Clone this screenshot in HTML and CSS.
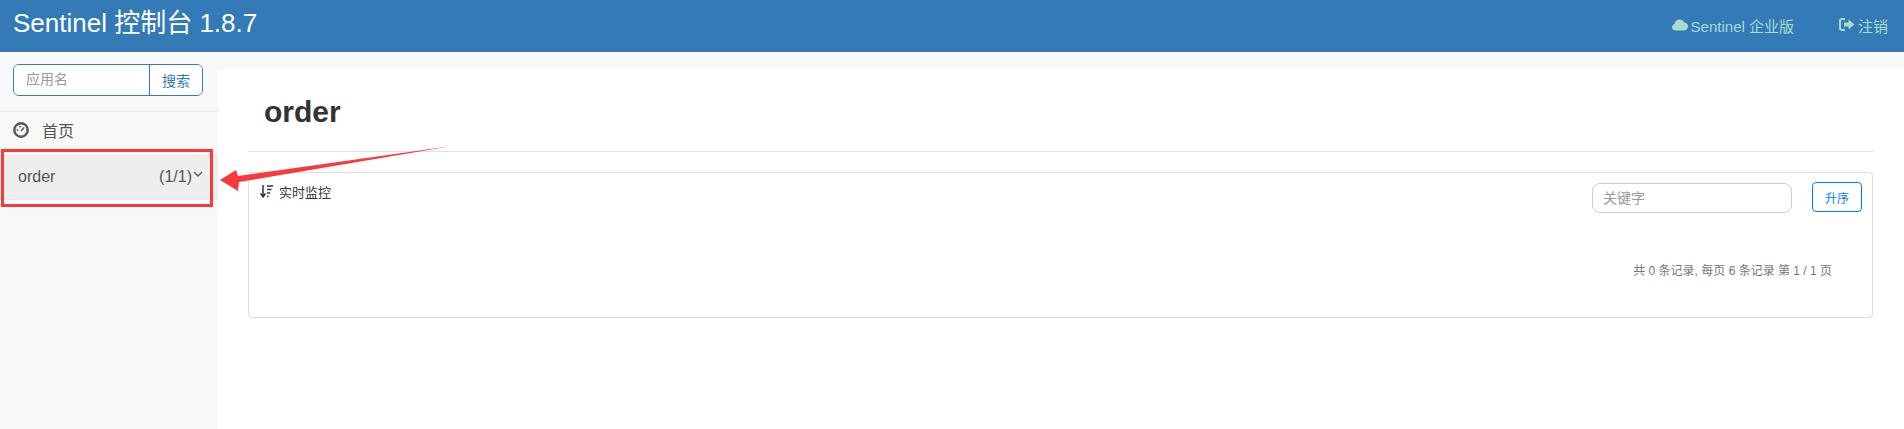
FILE: index.html
```html
<!DOCTYPE html>
<html lang="zh-CN">
<head>
    <meta charset="UTF-8" />
    <title>Sentinel 控制台</title>
    <link rel="stylesheet" href="styles.css">
</head>
<body>

<header class="navbar">
    <a class="brand">Sentinel 控制台 1.8.7</a>
    <div class="nav-links">
        <a class="nav-link">
            <svg class="nav-icon" viewBox="0 0 16 12" width="16" height="12"><path d="M4 11.5C1.8 11.5 0 10.2 0 8.2c0-1.6 1-2.8 2.5-3.2C2.8 2.6 4.8 .5 7.5 .5c2.2 0 3.9 1.3 4.6 3.1 2.2 0 3.900 1.700 3.900 3.900s-1.700 4-3.900 4z" fill="currentColor"/></svg>
            Sentinel 企业版
        </a>
        <a class="nav-link">
            <svg class="nav-icon" viewBox="0 0 16 13" width="16" height="13"><path d="M6 1H3.200C1.900 1 1 1.900 1 3.200v6.600C1 11.100 1.900 12 3.200 12H6" fill="none" stroke="currentColor" stroke-width="2"/><path d="M9.500 1.500 15.500 6.500 9.500 11.500V8.500H5v-4h4.500z" fill="currentColor"/></svg>
            注销
        </a>
    </div>
</header>

<div class="layout">
    <aside class="sidebar">
        <div class="search-box">
            <input class="search-input" type="text" placeholder="应用名" />
            <button class="search-btn">搜索</button>
        </div>
        <a class="home-link">
            <svg class="home-icon" viewBox="0 0 16 16" width="16" height="16">
                <circle cx="8" cy="8" r="6.700" fill="none" stroke="currentColor" stroke-width="2.400"/>
                <path d="M8 9 11 5.500" stroke="currentColor" stroke-width="1.500"/>
                <circle cx="4.500" cy="8" r=".9" fill="currentColor"/>
                <circle cx="7" cy="4.600" r=".9" fill="currentColor"/>
            </svg>
            首页
        </a>
        <div class="app-row">
            <span>order</span>
            <span class="app-count">(1/1)<svg class="chevron" viewBox="0 0 10 6" width="10" height="6"><path d="M1 1l4 4 4-4" fill="none" stroke="currentColor" stroke-width="1.300"/></svg></span>
        </div>
    </aside>

    <main class="content">
        <h1 class="page-title">order</h1>
        <div class="title-rule"></div>
        <section class="card">
            <div class="card-head">
                <div class="card-title">
                    <svg class="sort-icon" viewBox="0 0 13 13" width="13" height="13"><path d="M3 0v11M.5 8.500 3 12l2.500-3.500" fill="none" stroke="currentColor" stroke-width="1.500"/><path d="M7 1h6M7 4.500h4.500M7 8h3M7 11.500h1.500" stroke="currentColor" stroke-width="1.600"/></svg>
                    <span>实时监控</span>
                </div>
                <div class="card-tools">
                    <input class="key-input" type="text" placeholder="关键字" />
                    <button class="sort-btn">升序</button>
                </div>
            </div>
            <p class="pager">共 0 条记录, 每页 6 条记录 第 1 / 1 页</p>
        </section>
    </main>
</div>

<!-- 标注：红框和箭头 -->
<div class="mark-box"></div>
<svg class="mark-arrow" viewBox="0 0 240 60" width="240" height="60"><path d="M0 35 16 25 18 31 232 1 19 37 18 46z" fill="#f93a3a"/></svg>

</body>
</html>
```

FILE: styles.css
```css
* {
    box-sizing: border-box;
}
html, body {
    height: 100%;
}
body {
    margin: 0;
    overflow: hidden;
    background: #f8f8f8;
    color: #333;
    font-family: "Liberation Sans", "Noto Sans CJK SC", sans-serif;
    font-size: 14px;
}
.navbar {
    display: flex;
    justify-content: space-between;
    height: 52px;
    padding: 0 16px 0 13px;
    background: #337ab7;
}
.brand {
    padding-top: 8px;
    color: #fff;
    font-size: 26px;
    line-height: 30px;
}
.nav-links {
    display: flex;
    gap: 45px;
    padding-top: 15px;
}
.nav-link {
    display: flex;
    align-items: center;
    gap: 3px;
    height: 20px;
    color: #a8dcd1;
    font-size: 15px;
}
.nav-icon {
    margin-top: -1px;
}
.layout {
    display: flex;
    height: 377px;
}
.sidebar {
    flex: none;
    width: 218px;
    padding-top: 12px;
}
.search-box {
    display: flex;
    height: 32px;
    margin: 0 15px 15px 13px;
    border: 1px solid #337ab7;
    border-radius: 6px;
    overflow: hidden;
    background: #fff;
}
.search-input {
    flex: 1;
    min-width: 0;
    padding: 0 12px 3px;
    border: 0;
    outline: none;
    font: inherit;
}
.search-input::placeholder, .key-input::placeholder {
    color: #999;
    opacity: 1;
}
.search-btn {
    flex: none;
    width: 53px;
    padding: 0;
    border: 0;
    border-left: 1px solid #337ab7;
    background: #fff;
    color: #337ab7;
    font: inherit;
}
.home-link {
    display: flex;
    align-items: center;
    gap: 13px;
    height: 44px;
    padding: 0 0 7px 13px;
    border-top: 1px solid #e7e7e7;
    color: #555;
    font-size: 16px;
}
.app-row {
    display: flex;
    justify-content: space-between;
    align-items: center;
    height: 45px;
    padding: 0 15px 2px 18px;
    border-top: 1px solid #e7e7e7;
    border-bottom: 1px solid #e7e7e7;
    background: #eee;
    color: #555;
    font-size: 16px;
}
.app-count {
    display: flex;
    align-items: center;
}
.chevron {
    margin: -5px 0 0 1px;
}
.content {
    flex: 1;
    margin-top: 17px;
    padding: 0 31px 0 30px;
    background: #fff;
}
.page-title {
    margin: 0;
    padding: 26px 0 0 16px;
    height: 82px;
    color: #333;
    font-size: 30px;
    line-height: 34px;
}
.title-rule {
    height: 1px;
    background: #e2e2e2;
}
.card {
    height: 146px;
    margin-top: 20px;
    border: 1px solid #ddd;
    border-radius: 4px;
}
.card-head {
    display: flex;
    justify-content: space-between;
    height: 90px;
}
.card-title {
    display: flex;
    align-items: center;
    gap: 6px;
    height: 20px;
    margin: 8px 0 0 11px;
    font-size: 13px;
}
.sort-icon {
    flex: none;
}
.card-tools {
    display: flex;
    align-items: flex-start;
    gap: 20px;
    padding: 9px 10px 0 0;
}
.key-input {
    width: 200px;
    height: 30px;
    margin-top: 1px;
    padding: 0 10px;
    border: 1px solid #ccc;
    border-radius: 8px;
    outline: none;
    font: inherit;
}
.sort-btn {
    width: 50px;
    height: 30px;
    padding: 0;
    border: 1px solid #007bff;
    border-radius: 4px;
    background: #fff;
    color: #007bff;
    font: inherit;
    font-size: 12px;
}
.pager {
    margin: 0;
    padding-right: 40px;
    color: #777;
    font-size: 12px;
    line-height: 17px;
    text-align: right;
}

/* annotation drawn on top of the screenshot */
.mark-box {
    position: absolute;
    left: 1px;
    top: 149px;
    width: 212px;
    height: 58px;
    border: 3px solid #f93a3a;
}
.mark-arrow {
    position: absolute;
    left: 220px;
    top: 145px;
}
```
